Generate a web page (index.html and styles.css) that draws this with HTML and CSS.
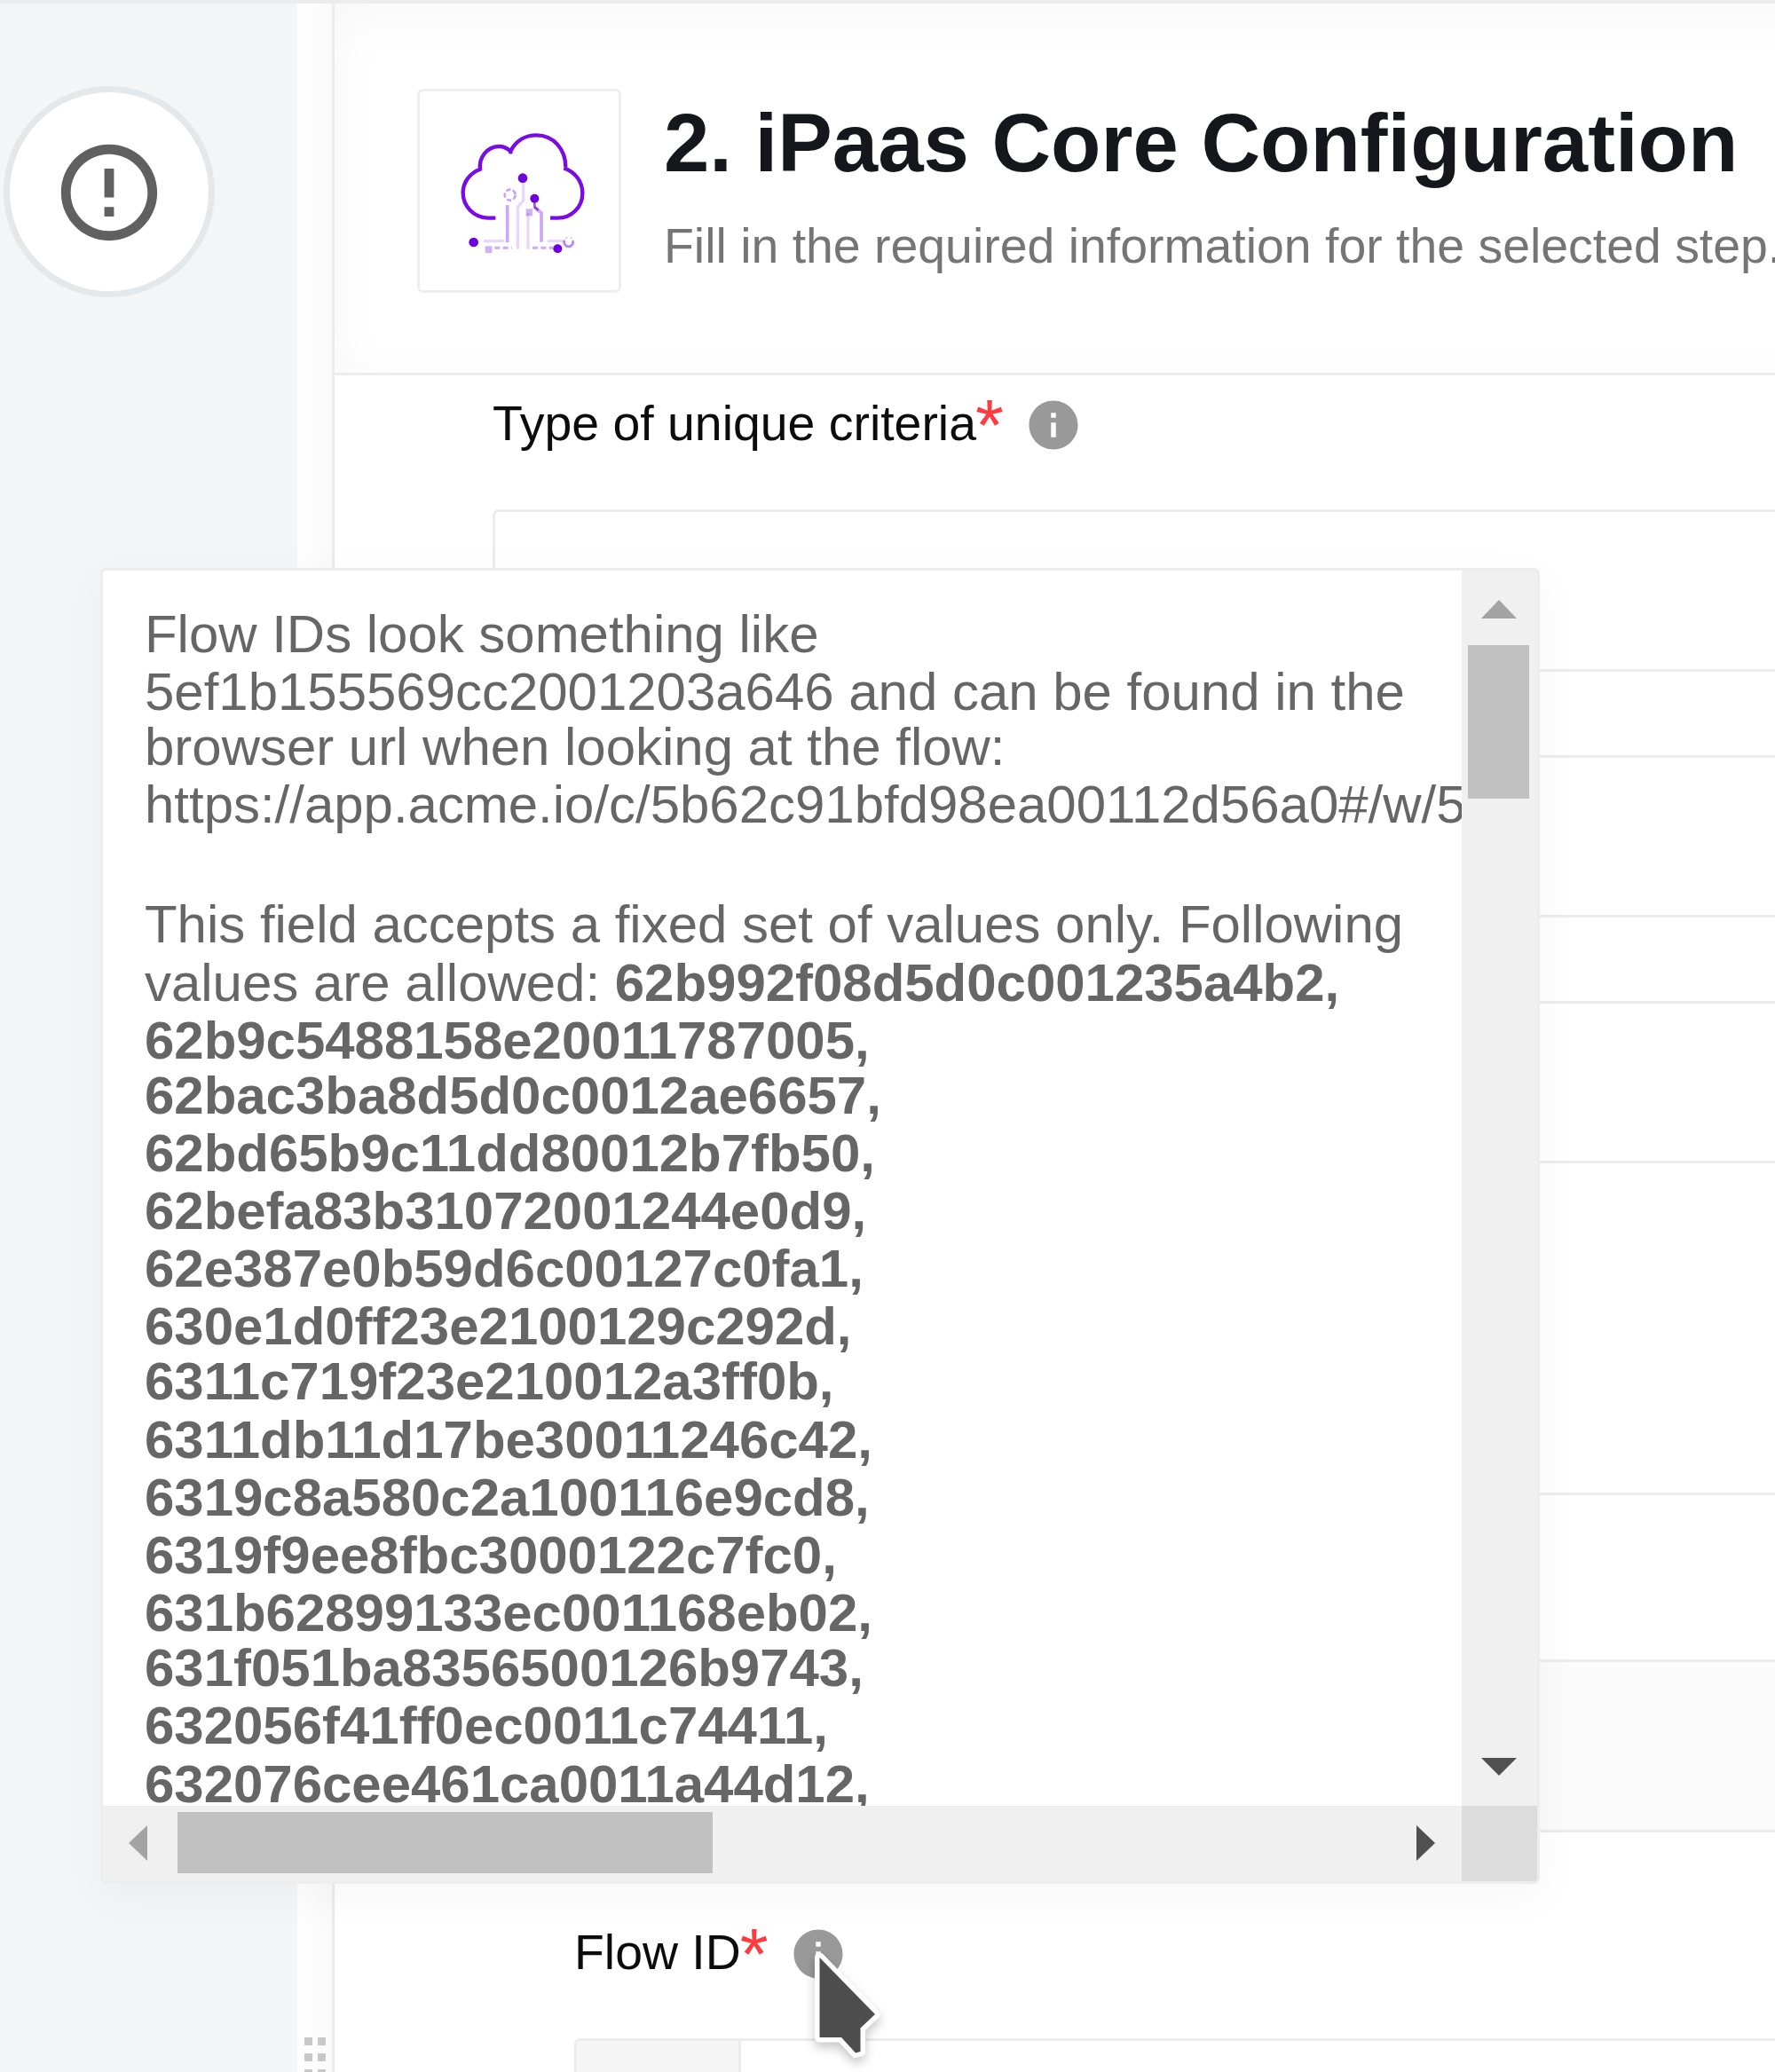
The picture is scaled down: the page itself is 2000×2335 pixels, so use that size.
FILE: index.html
```html
<!DOCTYPE html>
<html lang="en">
<head>
<meta charset="utf-8">
<title>iPaas Core Configuration</title>
<link rel="stylesheet" href="styles.css">
</head>
<body>
<div class="topbar"></div>
<div class="layout">
  <aside class="sidebar">
    <div class="step">
      <svg class="step-icon" viewBox="0 0 24 24"><path fill="#606060" d="M11 15h2v2h-2zm0-8h2v6h-2zm1-5C6.48 2 2 6.48 2 12s4.48 10 10 10 10-4.48 10-10S17.52 2 12 2zm0 18c-4.42 0-8-3.58-8-8s3.58-8 8-8 8 3.58 8 8-3.58 8-8 8z"/></svg>
    </div>
  </aside>
  <div class="divider">
    <div class="grip"><i></i><i></i><i></i><i></i><i></i><i></i></div>
  </div>
  <main class="panel">
    <header class="head">
      <div class="logo">
        <svg viewBox="39 39 672 672" width="224" height="224" fill="none">
          <g stroke="#7a0be6" stroke-width="13">
            <path d="M295 467H268C222 465 185 428 185 382C185 346 208 315 243 302C238 262 266 227 305 225C320 224 333 230 346 241C364 206 396 187 433 187C492 187 532 235 532 295"/>
            <path d="M346 250V232M526 298C566 312 589 345 589 383C589 430 552 467 506 467H480"/>
          </g>
          <g stroke="#7a0be6" stroke-width="11" opacity=".36">
            <path d="M335 423V550M450 548V450L427 430"/>
          </g>
          <path d="M427 405V430L440 441" stroke="#7a0be6" stroke-width="8" opacity=".7"/>
          <g stroke="#7a0be6" stroke-width="10" opacity=".17">
            <path d="M370 572V430L389 408V345M405 572V450M255 545H325M470 545H530"/>
          </g>
          <path d="M292 568H350M420 568H490" stroke="#7a0be6" stroke-width="9" stroke-dasharray="18 10" opacity=".35"/>
          <g fill="#6d00dc">
            <circle cx="387" cy="332" r="16"/><circle cx="427" cy="401" r="15"/>
            <circle cx="221" cy="549" r="16"/><circle cx="505" cy="571" r="15"/>
          </g>
          <g fill="#7a0be6" opacity=".33"><rect x="398" y="436" width="22" height="24"/><rect x="260" y="562" width="23" height="23"/></g>
          <circle cx="344" cy="389" r="18" stroke="#7a0be6" stroke-width="8" stroke-dasharray="16 7" opacity=".38"/>
          <path d="M528 543a15 15 0 1 0 28 0" stroke="#7a0be6" stroke-width="8" opacity=".5"/>
          <path d="M531 537l8-6M547 531l8 6" stroke="#7a0be6" stroke-width="5" opacity=".2"/>
        </svg>
      </div>
      <div class="head-text">
        <h1>2. iPaas Core Configuration</h1>
        <p>Fill in the required information for the selected step.</p>
      </div>
    </header>
    <section class="form">
      <div class="label"><span>Type of unique criteria</span><b>*</b>
        <svg class="info" viewBox="0 0 24 24"><path fill="#999" d="M12 2C6.48 2 2 6.48 2 12s4.48 10 10 10 10-4.48 10-10S17.52 2 12 2zm1 15h-2v-6h2v6zm0-8h-2V7h2v2z"/></svg>
      </div>
      <div class="box"></div>
      <div class="box"></div>
      <div class="box"></div>
      <div class="rows"><div></div><div class="shade"></div></div>
      <div class="nested">
        <div class="label"><span>Flow ID</span><b>*</b>
          <svg class="info" viewBox="0 0 24 24"><path fill="#999" d="M12 2C6.48 2 2 6.48 2 12s4.48 10 10 10 10-4.48 10-10S17.52 2 12 2zm1 15h-2v-6h2v6zm0-8h-2V7h2v2z"/></svg>
        </div>
        <div class="box input"><div class="prefix"></div></div>
      </div>
    </section>
  </main>
</div>

<div class="popup">
  <div class="content">
    <div class="line">Flow IDs look something like</div>
    <div class="line tight">5ef1b155569cc2001203a646 and can be found in the</div>
    <div class="line">browser url when looking at the flow:</div>
    <div class="line para">https://app.acme.io/c/5b62c91bfd98ea00112d56a0#/w/5</div>
    <div class="line">This field accepts a fixed set of values only. Following</div>
    <div class="line">values are allowed: <strong>62b992f08d5d0c001235a4b2,</strong></div>
    <div class="line bold tight">62b9c5488158e20011787005,</div>
    <div class="line bold">62bac3ba8d5d0c0012ae6657,</div>
    <div class="line bold">62bd65b9c11dd80012b7fb50,</div>
    <div class="line bold">62befa83b31072001244e0d9,</div>
    <div class="line bold">62e387e0b59d6c00127c0fa1,</div>
    <div class="line bold tight">630e1d0ff23e2100129c292d,</div>
    <div class="line bold">6311c719f23e210012a3ff0b,</div>
    <div class="line bold">6311db11d17be30011246c42,</div>
    <div class="line bold">6319c8a580c2a100116e9cd8,</div>
    <div class="line bold">6319f9ee8fbc3000122c7fc0,</div>
    <div class="line bold tight">631b62899133ec001168eb02,</div>
    <div class="line bold">631f051ba8356500126b9743,</div>
    <div class="line bold">632056f41ff0ec0011c74411,</div>
    <div class="line bold">632076cee461ca0011a44d12,</div>
  </div>
  <div class="vbar">
    <svg width="40" height="21" viewBox="0 0 40 21"><path fill="#a3a3a3" d="M20 0L40 21H0z"/></svg>
    <div class="vthumb"></div>
    <svg class="end" width="40" height="20" viewBox="0 0 40 20"><path fill="#505050" d="M0 0H40L20 20z"/></svg>
  </div>
  <div class="hbar">
    <svg width="21" height="40" viewBox="0 0 21 40"><path fill="#a3a3a3" d="M21 0V40L0 20z"/></svg>
    <div class="hthumb"></div>
    <svg class="end" width="21" height="40" viewBox="0 0 21 40"><path fill="#505050" d="M0 0L21 20L0 40z"/></svg>
  </div>
  <div class="corner"></div>
</div>

<svg class="cursor" width="110" height="150" viewBox="900 2185 110 150">
  <path d="M923.5 2206L986 2270L969.5 2285.5V2312L964 2313.5L948 2296H923.5z" fill="#fff" stroke="#fff" stroke-width="11" stroke-linejoin="round"/>
  <path d="M923.5 2206L986 2270L969.5 2285.5V2312L964 2313.5L948 2296H923.5z" fill="#4d4d4d"/>
</svg>
</body>
</html>
```
FILE: styles.css
```css
* { box-sizing: border-box; }
body {
  margin: 0;
  width: 2000px;
  height: 2335px;
  overflow: hidden;
  position: relative;
  background: #fff;
  font-family: "Liberation Sans", Arial, sans-serif;
}
svg { display: block; flex: none; }
.topbar { height: 4px; background: #ececec; }
.layout { display: flex; height: 2331px; }

.sidebar { width: 335px; flex: none; background: #f3f5f7; padding: 93px 0 0 4px; }
.step {
  width: 238px;
  height: 238px;
  border: 7px solid #e4e8eb;
  border-radius: 50%;
  background: #fff;
  display: flex;
  align-items: center;
  justify-content: center;
}
.step-icon { width: 130px; height: 130px; margin-top: 1px; }

.divider {
  width: 39px;
  flex: none;
  background: linear-gradient(to right, #fff, #fafafa);
  padding: 2292px 0 0 8px;
}
.grip { display: grid; grid-template-columns: 9px 9px; gap: 9px 6px; }
.grip i { height: 9px; background: #c8c8c8; border-radius: 1px; }

.panel { flex: 1; min-width: 0; border-left: 3px solid #ececec; overflow: hidden; }
.head {
  height: 419px;
  margin-right: -100px;
  border-bottom: 3px solid #ececec;
  padding: 96px 0 0 93px;
  display: flex;
  gap: 48px;
  box-shadow: inset 0 12px 60px rgba(0, 0, 0, .035);
}
.logo {
  width: 230px;
  height: 230px;
  flex: none;
  border: 3px solid #eee;
  border-radius: 7px;
  background: #fff;
}
.head-text { padding-top: 11px; white-space: nowrap; }
h1 { margin: 0; font-size: 92.3px; line-height: 100px; color: #15171c; }
.head-text p { margin: 34px 0 0; font-size: 55.4px; line-height: 64px; color: #757575; }

.form { padding: 22px 0 0 178px; }
.label { display: flex; height: 64px; font-size: 55.4px; line-height: 64px; color: #0c0c0c; white-space: nowrap; }
.label b { width: 35px; margin: -7px 0 0 -1px; font-weight: 400; font-size: 82px; line-height: 82px; color: #ff3b3f; }
.info { width: 66px; height: 66px; margin: 1px 0 0 20px; }
.box {
  height: 183px;
  margin: 94px -8px 0 0;
  border: 3px solid #ececec;
  border-radius: 7px;
}
.label + .box { margin-top: 65px; }
.rows { margin: 371px -8px 0 0; border: 3px solid #ececec; }
.rows div { height: 185px; }
.rows .shade { border-top: 3px solid #ececec; height: 192px; background: #fbfbfb; }
.nested { padding: 103px 0 0 92px; }
.input { display: flex; }
.prefix { width: 185px; background: #f5f5f5; border-right: 3px solid #ececec; }

.popup {
  position: absolute;
  left: 113px;
  top: 640px;
  width: 1622px;
  height: 1483px;
  border: 3px solid #ededed;
  border-radius: 6px;
  background: #fff;
  box-shadow: 0 14px 54px rgba(0, 0, 0, .04);
  display: grid;
  grid-template: 1392px 85px / 1531px 85px;
  overflow: hidden;
}
.content {
  overflow: hidden;
  padding: 39px 0 0 47px;
  font-size: 59.95px;
  color: #666;
  white-space: nowrap;
}
.line { height: 65.2px; line-height: 65px; }
.line.tight { height: 62px; }
.line.para { margin-bottom: 69.8px; }
.bold, strong { font-weight: 700; }
.vbar, .hbar { background: #f0f0f0; display: flex; }
.vbar { flex-direction: column; align-items: center; padding: 33px 2px 34px 0; }
.hbar { align-items: center; padding: 0 30px 2px 29px; }
.vthumb { width: 69px; height: 173px; margin-top: 30px; background: #c1c1c1; }
.hthumb { width: 603px; height: 69px; margin-left: 34px; background: #c1c1c1; }
.vbar .end { margin-top: auto; }
.hbar .end { margin-left: auto; }
.corner { background: #dcdcdc; }

.cursor { position: absolute; left: 900px; top: 2185px; filter: drop-shadow(0 6px 6px rgba(0, 0, 0, .22)); }
```
